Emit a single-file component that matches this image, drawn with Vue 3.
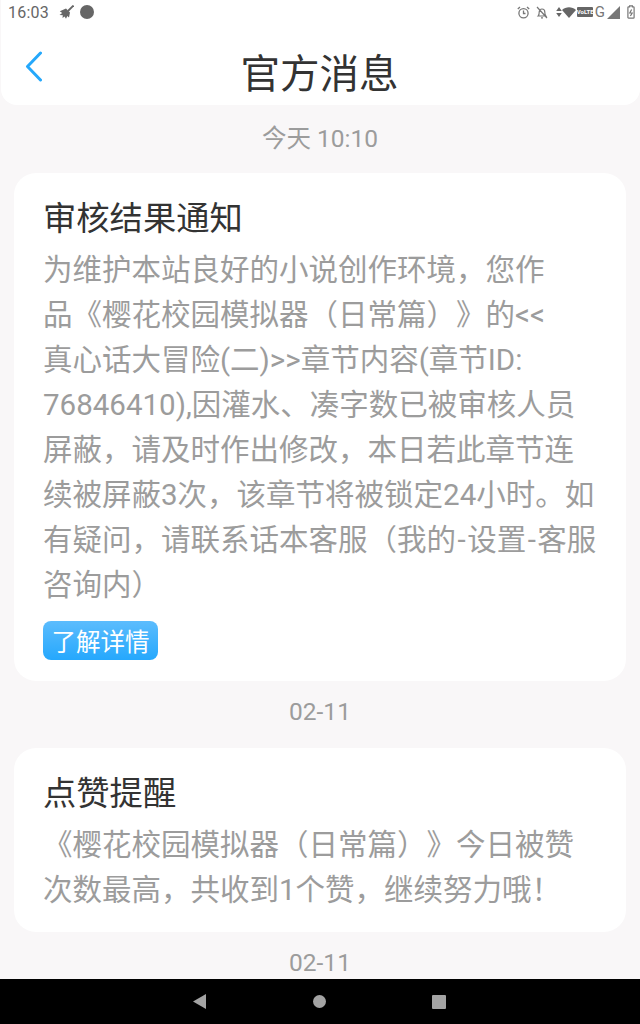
<template>
  <div class="screen">
    <header class="head">
      <div class="status">
        <div class="status-left">
          <span class="clock">16:03</span>
          <svg class="broom" width="15" height="14" viewBox="0 0 15 14">
            <path d="M14.500 .5 9 6" stroke="#666" stroke-width="1.800" fill="none" />
            <path d="M7 3.500 11 7.500 10 12.500 8.300 11 7 13.800 5.600 11.600 3.500 13 3.800 10.300 .5 10 3.200 8 .8 6.300Z" fill="#666" />
          </svg>
          <span class="dot"></span>
        </div>
        <div class="status-right">
          <svg class="alarm" width="13" height="13" viewBox="0 0 13 13" fill="none" stroke="#777" stroke-width="1.300">
            <circle cx="6.500" cy="7.200" r="4.600" />
            <path d="M6.500 4.600v2.900h2M.8 3 3 1M12.200 3 10 1" />
          </svg>
          <svg class="mute" width="12" height="13" viewBox="0 0 12 13" fill="none" stroke="#777" stroke-width="1.200">
            <path d="M2.200 10c1-1 1-2.200 1-4 0-1.800 1.200-3 2.800-3s2.800 1.200 2.800 3c0 1.800 0 3 1 4ZM5 11.800h2M1 1l10 11" />
          </svg>
          <svg class="arrows" width="6" height="12" viewBox="0 0 6 12" fill="#666">
            <path d="M3 1 5.800 5H.2ZM3 11 .2 7h5.600Z" />
          </svg>
          <svg width="14" height="11" viewBox="0 0 14 11" fill="#666">
            <path d="M0 3C3.800-.8 10.200-.8 14 3L7 11Z" />
          </svg>
          <span class="volte">VoLTE</span>
          <span class="net">G</span>
          <svg width="13" height="13" viewBox="0 0 13 13" fill="#777">
            <path d="M13 0V13H0Z" />
          </svg>
          <svg class="battery" width="8" height="14" viewBox="0 0 8 14" fill="none" stroke="#777" stroke-width="1.200">
            <path d="M2.600.8h2.800v1.100h1c.4 0 .7.300.7.700v9.800c0 .4-.3.700-.7.700H1.600c-.4 0-.7-.3-.7-.7V2.600c0-.4.300-.7.700-.7h1Z" />
            <path d="M4.600 4.500 2.800 8h2.400L3.400 11" />
          </svg>
        </div>
      </div>
      <div class="nav">
        <svg class="back" width="18" height="33" viewBox="0 0 18 33" fill="none">
          <path d="M16.500 3 3.500 16.500l13 13.500" stroke="#25a8fb" stroke-width="3" stroke-linecap="round" stroke-linejoin="round" />
        </svg>
        <h1>官方消息</h1>
      </div>
    </header>

    <main class="list">
      <template v-for="m in messages" :key="m.title">
        <div class="date">{{ m.date }}</div>
        <section class="card">
          <h2>{{ m.title }}</h2>
          <p v-for="line in m.lines" :key="line">
            <span v-for="(part, i) in line.split(/(-)/)" :key="i" :class="{ hyphen: part === '-' }">{{ part }}</span>
          </p>
          <button v-if="m.action" class="more">{{ m.action }}</button>
        </section>
      </template>
      <div class="date">02-11</div>
    </main>

    <footer class="sysbar">
      <svg width="13" height="15" viewBox="0 0 13 15" fill="#a3a3a3"><path d="M13 0V15L0 7.500Z" /></svg>
      <svg width="13" height="13" viewBox="0 0 13 13" fill="#a3a3a3"><circle cx="6.500" cy="6.500" r="6.500" /></svg>
      <svg width="14" height="14" viewBox="0 0 14 14" fill="#a3a3a3"><rect width="14" height="14" rx="1" /></svg>
    </footer>
  </div>
</template>

<script setup>
// line breaks follow the Android text layout of the original, so they are spelled out
const messages = [
  {
    date: '今天 10:10',
    title: '审核结果通知',
    lines: [
      '为维护本站良好的小说创作环境，您作',
      '品《樱花校园模拟器（日常篇）》的<<',
      '真心话大冒险(二)>>章节内容(章节ID:',
      '76846410),因灌水、凑字数已被审核人员',
      '屏蔽，请及时作出修改，本日若此章节连',
      '续被屏蔽3次，该章节将被锁定24小时。如',
      '有疑问，请联系话本客服（我的-设置-客服',
      '咨询内）'
    ],
    action: '了解详情'
  },
  {
    date: '02-11',
    title: '点赞提醒',
    lines: [
      '《樱花校园模拟器（日常篇）》今日被赞',
      '次数最高，共收到1个赞，继续努力哦！'
    ]
  }
]
</script>

<style>
body {
  margin: 0;
  background: #f9f7f8;
}
</style>

<style scoped>
.screen {
  width: 640px;
  height: 1024px;
  display: flex;
  flex-direction: column;
  overflow: hidden;
  background: #f9f7f8;
  font-family: Roboto, "Noto Sans CJK SC", sans-serif;
  text-spacing-trim: space-all;
}
.head {
  height: 105px;
  flex: none;
  margin-left: 1px;
  background: #fff;
  border-radius: 0 0 16px 16px;
}
.status {
  height: 24px;
  display: flex;
  align-items: center;
  justify-content: space-between;
  padding: 0 5px 0 7px;
}
.status-left,
.status-right {
  display: flex;
  align-items: center;
}
.clock {
  font-size: 16px;
  color: #666;
  letter-spacing: .2px;
}
.broom {
  margin-left: 10px;
}
.dot {
  width: 14px;
  height: 14px;
  margin-left: 6px;
  border-radius: 50%;
  background: #666;
}
.mute {
  margin-left: 6px;
}
.arrows {
  margin-left: 8px;
}
.battery {
  margin-left: 7px;
}
.volte {
  width: 16px;
  height: 10px;
  margin-left: 1px;
  overflow: hidden;
  background: #666;
  color: #fff;
  font-size: 6px;
  font-weight: 700;
  line-height: 10px;
  text-align: center;
  white-space: nowrap;
  border-radius: 1px;
}
.net {
  margin: 0 2px;
  font-size: 15px;
  color: #777;
}
.nav {
  height: 46px;
  margin-top: 23px;
  position: relative;
  display: flex;
  align-items: center;
  justify-content: center;
}
.back {
  position: absolute;
  left: 23px;
  top: 3px;
}
h1 {
  margin: 0 2px 0 0;
  font-size: 39.500px;
  font-weight: 400;
  color: #333;
}
.list {
  flex: 1;
  min-height: 0;
  padding: 1px 14px 0;
}
.date {
  height: 67px;
  box-sizing: border-box;
  padding-bottom: 6px;
  display: flex;
  align-items: center;
  justify-content: center;
  font-size: 24.500px;
  color: #9c9c9c;
}
.card {
  padding: 22px 20px 19px 29px;
  background: #fff;
  border-radius: 22px;
}
h2 {
  margin: 0 0 5px;
  font-size: 33.300px;
  font-weight: 400;
  line-height: 48px;
  color: #333;
}
p {
  margin: 0;
  font-size: 29.500px;
  line-height: 45px;
  color: #9c9c9c;
  white-space: nowrap;
}
.hyphen {
  padding: 0 1.500px;
}
.more {
  display: block;
  margin: 13px 0 2px;
  padding: 0 8.500px;
  height: 39px;
  border: 0;
  border-radius: 8px;
  background: linear-gradient(#5cbcfd, #25a8fd);
  color: #fff;
  font: inherit;
  font-size: 24.500px;
}
.sysbar {
  height: 45px;
  flex: none;
  box-sizing: border-box;
  padding-right: 1px;
  display: flex;
  align-items: center;
  justify-content: center;
  gap: 106.500px;
  background: #000;
}
</style>
